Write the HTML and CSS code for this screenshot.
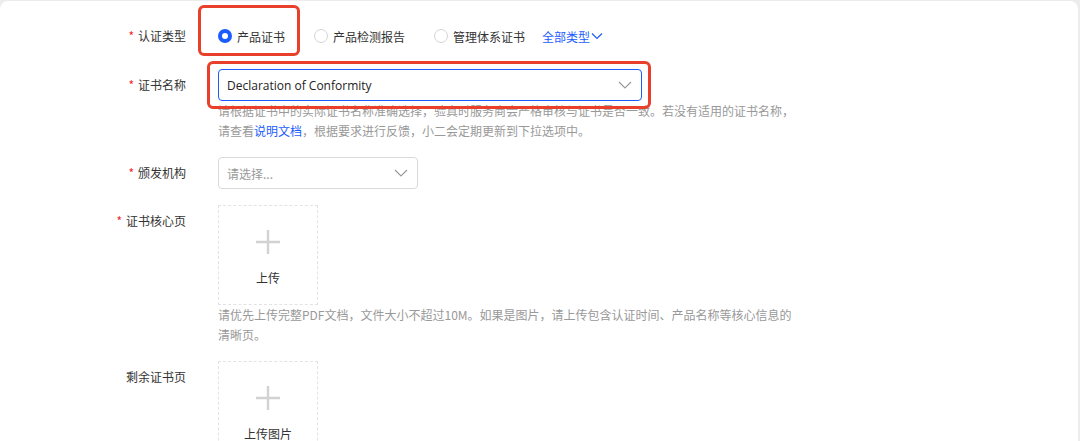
FILE: index.html
```html
<!DOCTYPE html>
<html lang="zh-CN">
<head>
  <meta charset="UTF-8">
  <meta name="viewport" content="width=device-width, initial-scale=1.0">
  <title>证书信息</title>
  <link rel="stylesheet" href="styles.css">
</head>
<body>
  <div class="form-card">
    <!-- 认证类型 -->
    <div class="form-row row-type">
      <div class="form-label required">认证类型</div>
      <div class="form-control">
        <div class="radio-group">
          <label class="radio checked"><span class="radio-dot"></span>产品证书</label>
          <label class="radio"><span class="radio-dot"></span>产品检测报告</label>
          <label class="radio"><span class="radio-dot"></span>管理体系证书</label>
          <a class="more-link" href="#">全部类型<svg width="12" height="8" viewBox="0 0 12 8"><path d="M1 1.5 6 6.5 11 1.5" fill="none" stroke="currentColor" stroke-width="1.2"/></svg></a>
        </div>
        <span class="mark mark-type"></span>
      </div>
    </div>

    <!-- 证书名称 -->
    <div class="form-row">
      <div class="form-label required">证书名称</div>
      <div class="form-control">
        <div class="select select-wide focused">
          <span class="select-value">Declaration of Conformity</span>
          <svg class="chevron" width="14" height="8" viewBox="0 0 14 8"><path d="M1 1 7 7 13 1" fill="none" stroke="currentColor" stroke-width="1.1"/></svg>
        </div>
        <p class="help">请根据证书中的实际证书名称准确选择，验真时服务商会严格审核与证书是否一致。若没有适用的证书名称，<br>请查看<a href="#">说明文档</a>，根据要求进行反馈，小二会定期更新到下拉选项中。</p>
        <span class="mark mark-name"></span>
      </div>
    </div>

    <!-- 颁发机构 -->
    <div class="form-row">
      <div class="form-label required">颁发机构</div>
      <div class="form-control">
        <div class="select select-narrow">
          <span class="select-placeholder">请选择...</span>
          <svg class="chevron" width="14" height="8" viewBox="0 0 14 8"><path d="M1 1 7 7 13 1" fill="none" stroke="currentColor" stroke-width="1.1"/></svg>
        </div>
      </div>
    </div>

    <!-- 证书核心页 -->
    <div class="form-row">
      <div class="form-label required">证书核心页</div>
      <div class="form-control">
        <div class="upload">
          <svg class="plus" width="26" height="26" viewBox="0 0 26 26"><path d="M13 1v24M1 13h24" stroke="currentColor" stroke-width="2.4"/></svg>
          <span class="upload-text">上传</span>
        </div>
        <p class="help">请优先上传完整PDF文档，文件大小不超过10M。如果是图片，请上传包含认证时间、产品名称等核心信息的<br>清晰页。</p>
      </div>
    </div>

    <!-- 剩余证书页 -->
    <div class="form-row">
      <div class="form-label">剩余证书页</div>
      <div class="form-control">
        <div class="upload">
          <svg class="plus" width="26" height="26" viewBox="0 0 26 26"><path d="M13 1v24M1 13h24" stroke="currentColor" stroke-width="2.4"/></svg>
          <span class="upload-text">上传图片</span>
        </div>
      </div>
    </div>
  </div>
</body>
</html>
```

FILE: styles.css
```css
* {
  box-sizing: border-box;
}
body {
  margin: 0;
  background: #ececec;
  font-family: "Noto Sans CJK SC", sans-serif;
  font-size: 12px;
  color: #333;
}
.form-card {
  background: #fff;
  margin: 1px 2px 0 0;
  border-radius: 8px 8px 0 0;
  padding-top: 19px;
  height: 440px;
  overflow: hidden;
}
.form-row {
  display: flex;
  margin-bottom: 16px;
}
.row-type {
  margin-bottom: 17px;
}
.form-label {
  width: 186px;
  height: 32px;
  text-align: right;
  line-height: 32px;
  color: #333;
  flex-shrink: 0;
}
.form-label.required::before {
  content: "*";
  color: #f5222d;
  margin-right: 4px;
}
.form-control {
  position: relative;
  margin-left: 32px;
}
.radio-group {
  display: flex;
  align-items: center;
  height: 32px;
}
.radio {
  display: flex;
  align-items: center;
  margin-right: 29px;
  color: #333;
}
.radio-dot {
  width: 14px;
  height: 14px;
  border: 1px solid #d4d4d4;
  border-radius: 50%;
  margin-right: 5px;
  background: #fff;
}
.radio.checked .radio-dot {
  border: 4px solid #1b5cff;
  background: #fff;
}
.more-link {
  display: flex;
  align-items: center;
  color: #1b5cff;
  text-decoration: none;
  margin-left: -12px;
}
.more-link svg {
  margin-left: 1px;
}
.select {
  display: flex;
  align-items: center;
  justify-content: space-between;
  height: 32px;
  padding: 0 9px 0 8px;
  border: 1px solid #d9d9d9;
  border-radius: 4px;
  background: #fff;
}
.select-wide {
  width: 424px;
}
.select-narrow {
  width: 200px;
}
.select.focused {
  border-color: #1b5cff;
}
.select-value {
  font-family: "Open Sans", "Noto Sans CJK SC", sans-serif;
  font-size: 12px;
  color: #222;
}
.select-placeholder {
  color: #999;
}
.chevron {
  color: #999;
}
.help {
  margin: 0;
  line-height: 20px;
  color: #999;
  white-space: nowrap;
}
.help a {
  color: #1b5cff;
  text-decoration: none;
}
.upload {
  width: 100px;
  height: 100px;
  border: 1px dashed #e3e3e3;
  display: flex;
  flex-direction: column;
  align-items: center;
  padding-top: 23px;
}
.plus {
  color: #d2d2d2;
}
.upload-text {
  margin-top: 14px;
  color: #333;
}
/* red annotation frames drawn over the screenshot */
.mark {
  position: absolute;
  border: 3px solid #e8402a;
  border-radius: 6px;
  pointer-events: none;
}
.mark-type {
  left: -20px;
  top: -15px;
  width: 102px;
  height: 51px;
}
.mark-name {
  left: -11px;
  top: -8px;
  width: 444px;
  height: 48px;
}
```
